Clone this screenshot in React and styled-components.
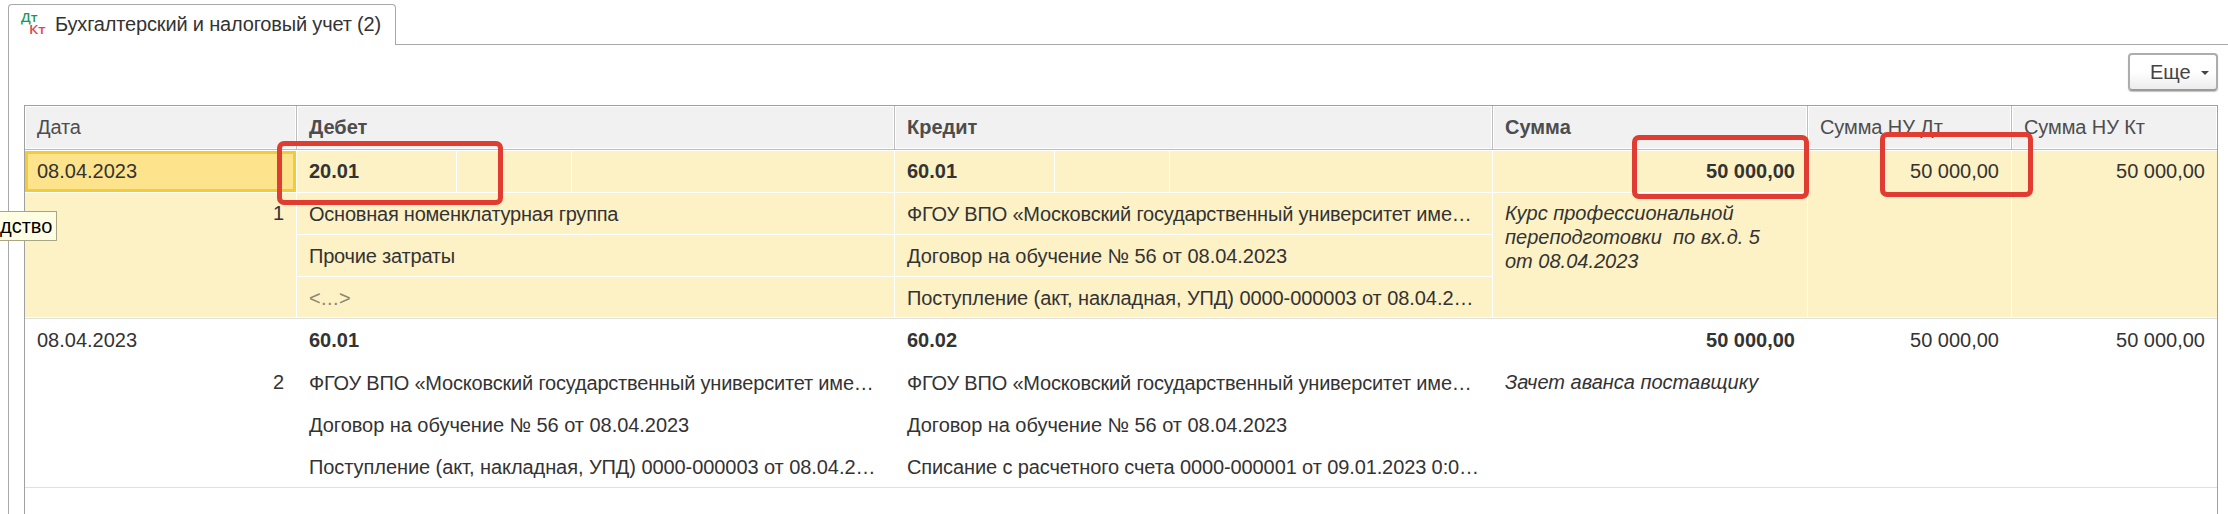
import React from 'react';
import styled, { createGlobalStyle } from "styled-components";

const GlobalStyle = createGlobalStyle`
    * {
        box-sizing: border-box;
    }
    body {
        margin: 0;
        overflow: hidden;
        background: #fff;
        font-family: "Liberation Sans", Arial, sans-serif;
        font-size: 20px;
        line-height: 24px;
        color: #333;
    }
`

const Page = styled.div`
    position: relative;
    display: flex;
    flex-direction: column;
    width: 2228px;
    height: 514px;
    padding: 4px 0 0 8px;
    overflow: hidden;
`
const TabBar = styled.div`
    display: flex;
    height: 41px;
    .rest{
        flex: 1;
        border-bottom: 1px solid #a8a8a8;
    }
`
const Tab = styled.div`
    display: flex;
    align-items: center;
    gap: 7px;
    width: 388px;
    padding: 0 0 2px 12px;
    border: 1px solid #a8a8a8;
    border-bottom: none;
    border-radius: 4px 4px 0 0;
    letter-spacing: -0.17px;
    white-space: nowrap;
`
const Panel = styled.div`
    flex: 1;
    display: flex;
    flex-direction: column;
    min-height: 0;
    padding: 8px 10px 0 15px;
    border-left: 1px solid #a8a8a8;
`
const Toolbar = styled.div`
    display: flex;
    justify-content: flex-end;
    height: 52px;
`
const MoreButton = styled.button`
    display: flex;
    align-items: center;
    gap: 10px;
    width: 90px;
    height: 38px;
    padding: 0 0 1px 20px;
    border: 2px solid #adadad;
    border-bottom-color: #9a9a9a;
    border-radius: 4px;
    background: linear-gradient(#fff 50%, #ececec);
    box-shadow: 0 1px 1px #c4c4c4;
    font: inherit;
    color: #444;
    svg{
        margin-top: 3px;
    }
`
const Table = styled.div`
    flex: 1;
    width: 2194px;
    border: 1px solid #a0a0a0;
    border-bottom: none;
`
const columns = "271px 597px 597px 314px 203px 1fr";

const Head = styled.div`
    display: grid;
    grid-template-columns: ${columns};
    gap: 1px;
    height: 44px;
    border-bottom: 1px solid #bdbdbd;
    background: #bdbdbd;
`
const HeadCell = styled.div`
    padding: 8px 11px 0;
    border: 1px solid #fff;
    background: #f1f1f1;
    color: #4d4d4d;
    font-weight: ${p => p.$bold ? 700 : 400};
    letter-spacing: ${p => p.$bold ? 0 : "-0.1px"};
    white-space: nowrap;
`
const Entry = styled.div`
    display: grid;
    grid-template-columns: ${columns};
    column-gap: 1px;
    height: 169px;
    padding: 1px 0;
    border-bottom: 1px solid #e0e0e0;
    --cell: ${p => p.$selected ? "#fdf1c6" : "#fff"};
`
const Column = styled.div`
    display: grid;
    grid-template-rows: ${p => p.$rows};
    row-gap: 1px;
    min-width: 0;
`
const Cell = styled.div`
    min-width: 0;
    padding: 8px 12px 0;
    background: var(--cell);
    text-align: ${p => p.$right ? "right" : "left"};
    font-weight: ${p => p.$bold ? 700 : 400};
    color: #333;
    white-space: nowrap;
    overflow: hidden;
`
const DateCell = styled(Cell)`
    ${p => p.$current && `
        padding: 5px 9px 0;
        border: 3px solid #f2cb38;
        background: #fde48c;
    `}
`
const Analytics = styled(Cell)`
    padding-top: 9px;
    padding-right: 0;
    letter-spacing: ${p => p.$tracking || 0}px;
    color: ${p => p.$muted ? "#8b8770" : "#333"};
`
const Comment = styled(Cell)`
    font-style: italic;
    white-space: pre-line;
`
const AccountLine = styled.div`
    display: grid;
    grid-template-columns: 159px 114px 1fr;
    gap: 1px;
`
// рамка-выделение поверх таблицы
const Mark = styled.div`
    position: absolute;
    left: ${p => p.$x}px;
    top: ${p => p.$y}px;
    width: ${p => p.$w}px;
    height: ${p => p.$h}px;
    border: 5px solid #e03c31;
    border-radius: 7px;
`
const Tooltip = styled.div`
    position: absolute;
    left: -1px;
    top: 211px;
    width: 58px;
    height: 30px;
    border: 1px solid #aaa583;
    background: #fffee3;
    line-height: 28px;
    color: #000;
`
const LogoText = styled.text`
    font-family: "Open Sans", sans-serif;
    font-size: 13px;
    font-weight: 600;
    letter-spacing: 0;
`

const university = { text: "ФГОУ ВПО «Московский государственный университет име…", tracking: -0.19 };
const contract = { text: "Договор на обучение № 56 от 08.04.2023", tracking: -0.04 };
const receipt = { text: "Поступление (акт, накладная, УПД) 0000-000003 от 08.04.2…", tracking: -0.07 };

const entries = [
    {
        date: "08.04.2023", num: 1, selected: true,
        debit: {
            account: "20.01",
            lines: [
                { text: "Основная номенклатурная группа", tracking: -0.23 },
                { text: "Прочие затраты", tracking: -0.2 },
                { text: "<...>", tracking: 0.4, muted: true },
            ],
        },
        credit: { account: "60.01", lines: [university, contract, receipt] },
        sum: "50 000,00",
        text: "Курс профессиональной\nпереподготовки \u00a0по вх.д. 5\nот 08.04.2023",
    },
    {
        date: "08.04.2023", num: 2, selected: false,
        debit: { account: "60.01", lines: [university, contract, receipt] },
        credit: {
            account: "60.02",
            lines: [
                university,
                contract,
                { text: "Списание с расчетного счета 0000-000001 от 09.01.2023 0:0…", tracking: -0.11 },
            ],
        },
        sum: "50 000,00",
        text: "Зачет аванса поставщику",
    },
];

const DtKtIcon = () => (
    <svg width="27" height="24" viewBox="0 0 27 24" overflow="visible">
        <LogoText x="0" y="10" fill="#1a9a50" textLength="16.5" lengthAdjust="spacingAndGlyphs">Дт</LogoText>
        <LogoText x="8" y="22" fill="#e04850" textLength="16.5" lengthAdjust="spacingAndGlyphs">Кт</LogoText>
    </svg>
);

const Account = ({ account, lines }) => (
    <Column $rows="41px 41px 41px 40px">
        <AccountLine>
            <Cell $bold>{account}</Cell>
            <Cell />
            <Cell />
        </AccountLine>
        {lines.map((line, i) => (
            <Analytics key={i} $tracking={line.tracking} $muted={line.muted}>{line.text}</Analytics>
        ))}
    </Column>
);

const App = () => {
    return (
        <Page>
            <GlobalStyle />
            <TabBar>
                <Tab>
                    <DtKtIcon />
                    <span>Бухгалтерский и налоговый учет (2)</span>
                </Tab>
                <div className="rest" />
            </TabBar>
            <Panel>
                <Toolbar>
                    <MoreButton>
                        Еще
                        <svg width="8" height="4" viewBox="0 0 8 4"><path d="M0 0h8L4 4z" fill="#444" /></svg>
                    </MoreButton>
                </Toolbar>
                <Table>
                    <Head>
                        <HeadCell>Дата</HeadCell>
                        <HeadCell $bold>Дебет</HeadCell>
                        <HeadCell $bold>Кредит</HeadCell>
                        <HeadCell $bold>Сумма</HeadCell>
                        <HeadCell>Сумма НУ Дт</HeadCell>
                        <HeadCell>Сумма НУ Кт</HeadCell>
                    </Head>
                    {entries.map(e => (
                        <Entry key={e.num} $selected={e.selected}>
                            <Column $rows="41px 1fr">
                                <DateCell $current={e.selected}>{e.date}</DateCell>
                                <Cell $right>{e.num}</Cell>
                            </Column>
                            <Account {...e.debit} />
                            <Account {...e.credit} />
                            <Column $rows="41px 1fr">
                                <Cell $bold $right>{e.sum}</Cell>
                                <Comment>{e.text}</Comment>
                            </Column>
                            <Cell $right>{e.sum}</Cell>
                            <Cell $right>{e.sum}</Cell>
                        </Entry>
                    ))}
                </Table>
            </Panel>
            <Tooltip>дство</Tooltip>
            <Mark $x={277} $y={141} $w={226} $h={64} />
            <Mark $x={1632} $y={135} $w={177} $h={64} />
            <Mark $x={1880} $y={132} $w={153} $h={65} />
        </Page>
    );
};

export default App;
